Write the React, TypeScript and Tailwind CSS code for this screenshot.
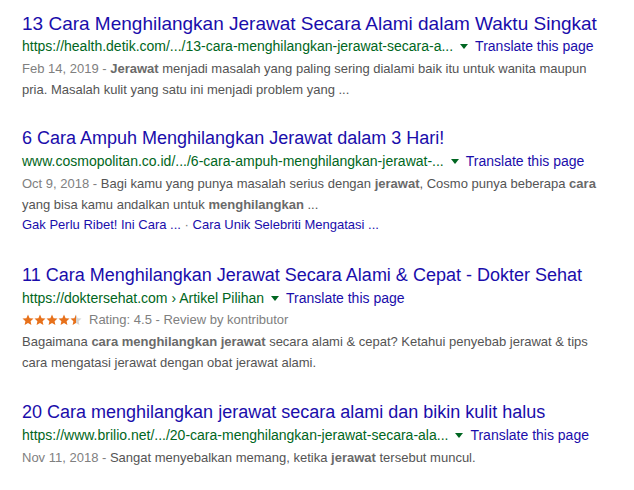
import React from "react";

type Result = {
  title: string;
  titleSize: string;
  gap: string;
  url: React.ReactNode;
  translate?: boolean;
  rating?: boolean;
  date?: string;
  lines: React.ReactNode[];
  sitelinks?: string[];
};

const B = ({ children }: { children: React.ReactNode }) => (
  <b className="font-bold text-[#6a6a6a]">{children}</b>
);

const results: Result[] = [
  {
    title: "13 Cara Menghilangkan Jerawat Secara Alami dalam Waktu Singkat",
    titleSize: "text-[19px]",
    gap: "mt-0",
    url: "https://health.detik.com/.../13-cara-menghilangkan-jerawat-secara-a...",
    translate: true,
    date: "Feb 14, 2019",
    lines: [
      <>
        <B>Jerawat</B> menjadi masalah yang paling sering dialami baik itu untuk wanita maupun
      </>,
      <>pria. Masalah kulit yang satu ini menjadi problem yang ...</>,
    ],
  },
  {
    title: "6 Cara Ampuh Menghilangkan Jerawat dalam 3 Hari!",
    titleSize: "text-[18px]",
    gap: "mt-[27px]",
    url: "www.cosmopolitan.co.id/.../6-cara-ampuh-menghilangkan-jerawat-...",
    translate: true,
    date: "Oct 9, 2018",
    lines: [
      <>
        Bagi kamu yang punya masalah serius dengan <B>jerawat</B>, Cosmo punya beberapa <B>cara</B>
      </>,
      <>
        yang bisa kamu andalkan untuk <B>menghilangkan</B> ...
      </>,
    ],
    sitelinks: ["Gak Perlu Ribet! Ini Cara ...", "Cara Unik Selebriti Mengatasi ..."],
  },
  {
    title: "11 Cara Menghilangkan Jerawat Secara Alami & Cepat - Dokter Sehat",
    titleSize: "text-[18px]",
    gap: "mt-[29px]",
    url: "https://doktersehat.com › Artikel Pilihan",
    translate: true,
    rating: true,
    lines: [
      <>
        Bagaimana <B>cara menghilangkan jerawat</B> secara alami &amp; cepat? Ketahui penyebab jerawat &amp; tips
      </>,
      <>cara mengatasi jerawat dengan obat jerawat alami.</>,
    ],
  },
  {
    title: "20 Cara menghilangkan jerawat secara alami dan bikin kulit halus",
    titleSize: "text-[18px]",
    gap: "mt-[28px]",
    url: "https://www.brilio.net/.../20-cara-menghilangkan-jerawat-secara-ala...",
    translate: true,
    date: "Nov 11, 2018",
    lines: [
      <>
        Sangat menyebalkan memang, ketika <B>jerawat</B> tersebut muncul.
      </>,
    ],
  },
];

const STAR = "M6 0.6 L7.6 4.2 L11.5 4.6 L8.6 7.2 L9.4 11.1 L6 9.1 L2.6 11.1 L3.4 7.2 L0.5 4.6 L4.4 4.2 Z";

function Stars() {
  return (
    <svg width="60" height="12" viewBox="0 0 60 12" className="mr-[7px] shrink-0">
      <defs>
        <linearGradient id="half" x1="0" x2="1" y1="0" y2="0">
          <stop offset="50%" stopColor="#e7711b" />
          <stop offset="50%" stopColor="#d5d5d5" />
        </linearGradient>
      </defs>
      {[0, 1, 2, 3, 4].map((i) => (
        <path
          key={i}
          d={STAR}
          transform={`translate(${i * 12} 0)`}
          fill={i < 4 ? "#e7711b" : "url(#half)"}
        />
      ))}
    </svg>
  );
}

export default function App() {
  return (
    <div
      className="min-h-screen w-full bg-white pl-[22px] pt-[12px]"
      style={{ fontFamily: '"Liberation Sans", Arial, sans-serif' }}
    >
      <div className="flex flex-col">
        {results.map((r) => (
          <div key={r.title} className={`flex flex-col ${r.gap}`}>
            <a className={`${r.titleSize} leading-[23px] text-[#1a0dab] whitespace-nowrap`}>{r.title}</a>
            <div className="mt-[1px] flex items-center text-[14px] leading-[21px] whitespace-nowrap">
              <cite className="not-italic text-[#006621]">{r.url}</cite>
              {r.translate && (
                <>
                  <span className="mx-[7px] inline-block h-0 w-0 border-x-[4px] border-t-[5px] border-x-transparent border-t-[#006621]" />
                  <a className="text-[#1a0dab]">Translate this page</a>
                </>
              )}
            </div>
            {r.rating && (
              <div className="flex items-center text-[13px] leading-[21px] text-[#808080] whitespace-nowrap">
                <Stars />
                <span>Rating: 4.5 - Review by kontributor</span>
              </div>
            )}
            <div className="mt-[1px] text-[13px] leading-[21px] text-[#545454]">
              {r.lines.map((l, i) => (
                <div key={i} className="whitespace-nowrap">
                  {i === 0 && r.date && <span className="text-[#808080]">{r.date} - </span>}
                  {l}
                </div>
              ))}
            </div>
            {r.sitelinks && (
              <div className="text-[13px] leading-[20px] whitespace-nowrap">
                <a className="text-[#1a0dab]">{r.sitelinks[0]}</a>
                <span className="text-[#808080]"> · </span>
                <a className="text-[#1a0dab]">{r.sitelinks[1]}</a>
              </div>
            )}
          </div>
        ))}
      </div>
    </div>
  );
}
